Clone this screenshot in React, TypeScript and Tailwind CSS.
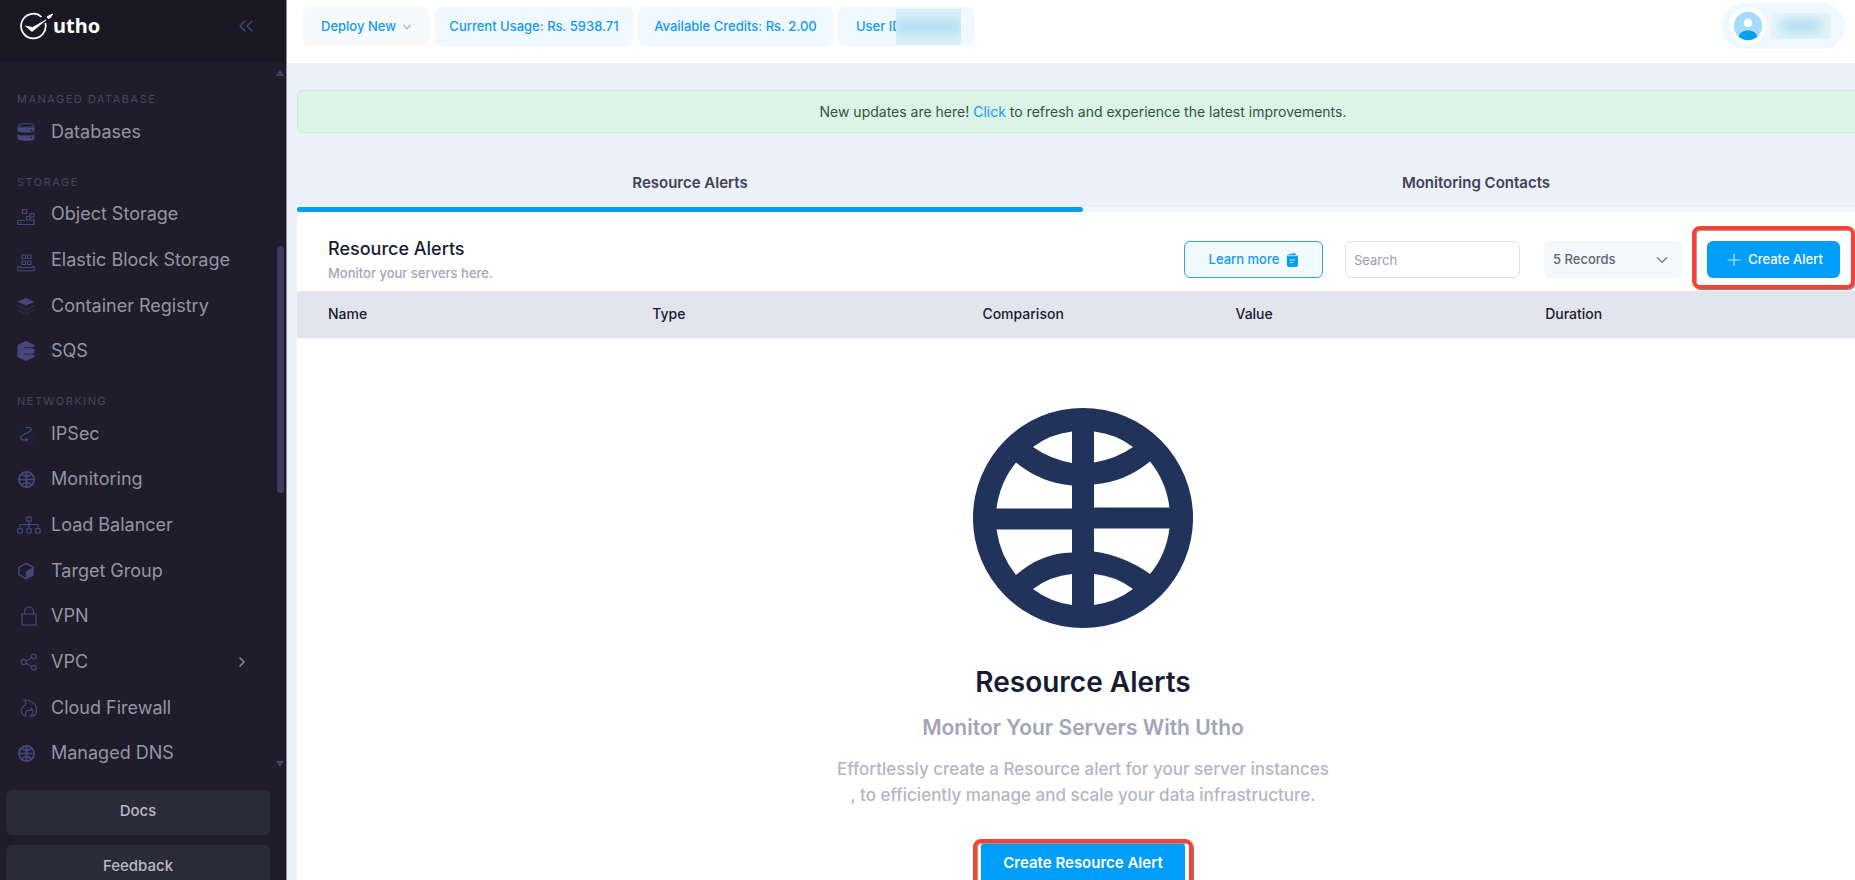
import type { ReactNode } from "react";
import { ChevronDown, ChevronRight, ChevronsLeft, Plus } from "lucide-react";

function GlobeIcon({ className }: { className: string }) {
  return (
    <svg viewBox="0 0 220 220" className={className} fill="currentColor" fillRule="evenodd" aria-hidden="true">
      <path
        d="M110 0A110 110 0 1 1 110 220A110 110 0 1 1 110 0Z
        M60 39Q77 26 99 23.5V55Q77 51 60 39Z
        M160 39Q143 26 121 23.5V54.5Q143 51 160 39Z
        M43 54.5Q68 75 99 77.5V100.5H23.5Q27 74 43 54.5Z
        M177 53.5Q152 74 121 76.5V99.5H196.500Q193 73 177 53.5Z
        M23.5 121.500H99V144.500Q68 145 43 167Q27 147 23.5 121.500Z
        M196.500 120.500H121V143.500Q152 148 177 166Q193 147 196.500 120.500Z
        M60 181Q77 168 99 166V197Q77 194 60 181Z
        M160 181Q143 168 121 166V197Q143 194 160 181Z"
      />
    </svg>
  );
}

function Icon({ className = "w-[18px] h-[18px]", box = "0 0 18 18", children }: { className?: string; box?: string; children: ReactNode }) {
  return (
    <svg viewBox={box} className={className} fill="none" stroke="currentColor" strokeWidth="1.2" aria-hidden="true">
      {children}
    </svg>
  );
}

const databaseIcon = (
  <Icon>
    <g fill="currentColor" stroke="none">
      <path d="M.5 3.500C2 5.500 16 5.500 17.500 3.500V8C16 10 2 10 .5 8Z" />
      <path d="M.5 11C2 13.200 16 13.200 17.500 11V16C16 18.500 2 18.500 .5 16Z" />
      <circle cx="14.300" cy="7.200" r=".9" fill="#1f1d2b" />
      <circle cx="14.300" cy="14.300" r=".9" fill="#1f1d2b" />
    </g>
    <ellipse cx="9" cy="2.500" rx="8" ry="1.900" strokeWidth="1" />
  </Icon>
);
const objectIcon = (
  <Icon className="mt-1.5 h-[18px] w-[18px]">
    <path d="M5.500 1.500H9.500V5.500H5.500ZM13 5.500H17V9H13ZM9.500 8.500H13V12H9.500ZM13 9V12H17V16.500H.7V12.500H8" />
    <path d="M3 14.500H4.500" />
  </Icon>
);
const blockIcon = (
  <Icon className="mt-1.5 h-[18px] w-[18px]">
    <path d="M5 1H8.500V4.500H5ZM10.500 1H14V4.500H10.500ZM5 7H8.500V10.500H5ZM10.500 7H14V10.500H10.500ZM3 12.500H.8V16.800H17.200V12.500H15M3 12.500V13.500H15V12.500" strokeWidth="1.100" />
  </Icon>
);
const layersIcon = (
  <Icon>
    <g fill="currentColor" stroke="none">
      <path d="M9 1L17.500 4.800L9 8.500L.5 4.800Z" />
      <path d="M.8 8L9 11.500L17.200 8L17.500 9.200L9 13.200L.5 9.200Z" opacity=".4" />
      <path d="M.8 12.500L9 16L17.200 12.500L17.500 13.500L9 17.500L.5 13.500Z" opacity=".4" />
    </g>
  </Icon>
);
const sqsIcon = (
  <Icon className="h-5 w-[18px]" box="0 0 18 20">
    <path fill="currentColor" stroke="none" d="M9 0L17.500 4V6L14 7L17.500 8V12L14 13L17.500 14V16L9 20L.5 16V4Z" />
    <path d="M7 6.500L17 6.800M7 13.300L17 13" stroke="#1f1d2b" strokeWidth=".7" />
  </Icon>
);
const ipsecIcon = (
  <Icon>
    <path d="M9 2.500H12.500A2 2 0 0 1 13.500 6L5.500 10.500A2 2 0 0 0 6 14.800H10" />
    <path d="M9 13.300L11 14.800L9 16.300Z" fill="currentColor" strokeWidth=".8" />
    <g stroke="#1c2450">
      <circle cx="3.500" cy="3.500" r="2.500" />
      <circle cx="14.800" cy="14" r="2.800" />
    </g>
  </Icon>
);
const balancerIcon = (
  <Icon className="h-[18px] w-6" box="0 0 24 18">
    <path d="M9.800 1.200H14.200V5.200H9.800ZM12 5.200V12M3 11.500V8.500H21V11.500" />
    <rect x=".8" y="12.500" width="4.600" height="4.600" rx="1" />
    <rect x="9.700" y="12.500" width="4.600" height="4.600" rx="1" />
    <rect x="18.600" y="12.500" width="4.600" height="4.600" rx="1" />
  </Icon>
);
const cubeIcon = (
  <Icon>
    <path d="M9 1.500L16 5.200V12.800L9 16.700L2 12.800V5.200Z" strokeWidth="1.500" />
    <path d="M16.300 5.200V13L9 17V9.300Z" fill="currentColor" stroke="none" />
  </Icon>
);
const lockIcon = (
  <Icon className="h-5 w-[18px]" box="0 0 18 20">
    <path d="M2 8H16V19H2ZM4.500 8V5.500A4.500 4.500 0 0 1 13.500 5.500V8" />
  </Icon>
);
const shareIcon = (
  <Icon>
    <circle cx="3.800" cy="9" r="2.600" />
    <circle cx="13.800" cy="3.500" r="2.400" />
    <circle cx="13.800" cy="14.700" r="2.400" />
    <path d="M6.200 8L11.600 4.800M6.200 10.200L11.600 13.500" />
  </Icon>
);
const flameIcon = (
  <Icon>
    <path d="M6 16.800H4.500C-.5 13.500 1 8.500 4.500 6.500C6.500 5 6 3 4 1C12 1 16.500 5.500 16.500 10.500C16.500 14 15 16.800 12.500 16.800H11C13.500 14.500 13.500 11.500 11.500 9.500C11.500 11.800 9.500 12.300 8.500 11C5.500 12.500 4.500 14.500 6 16.800Z" />
  </Icon>
);

type Item = { label: string; icon: ReactNode; arrow?: boolean; shift?: boolean };
const smallGlobe = <GlobeIcon className="mx-px h-[17px] w-[17px]" />;

const groups: { title: string; items: Item[] }[] = [
  { title: "MANAGED DATABASE", items: [{ label: "Databases", icon: databaseIcon }] },
  {
    title: "STORAGE",
    items: [
      { label: "Object Storage", icon: objectIcon },
      { label: "Elastic Block Storage", icon: blockIcon },
      { label: "Container Registry", icon: layersIcon },
      { label: "SQS", icon: sqsIcon },
    ],
  },
  {
    title: "NETWORKING",
    items: [
      { label: "IPSec", icon: ipsecIcon },
      { label: "Monitoring", icon: smallGlobe },
      { label: "Load Balancer", icon: balancerIcon },
      { label: "Target Group", icon: cubeIcon },
      { label: "VPN", icon: lockIcon, shift: true },
      { label: "VPC", icon: shareIcon, arrow: true, shift: true },
      { label: "Cloud Firewall", icon: flameIcon, shift: true },
      { label: "Managed DNS", icon: smallGlobe },
    ],
  },
];

function Logo() {
  return (
    <a href="#" className="flex items-center text-white">
      <svg viewBox="0 0 33 28" className="h-7 w-[33px]" fill="none" stroke="currentColor" aria-hidden="true">
        <path d="M21.500 4.800A12.300 12.300 0 1 0 25.300 11" strokeWidth="1.700" />
        <path d="M5.500 14L12 19.500L26 8L12.500 15.500Z" fill="currentColor" strokeWidth=".8" />
        <path d="M27.500 4.500L32.500 2L30.500 5.500L28 6.500Z" fill="currentColor" strokeWidth="1" />
      </svg>
      <span className="font-['Noto_Sans',sans-serif] text-xl leading-7 font-bold">utho</span>
    </a>
  );
}

function Sidebar() {
  return (
    <aside className="flex h-screen w-[287px] shrink-0 flex-col overflow-hidden border-r border-[#8d8d96] bg-[#1f1d2b]">
      <div className="flex h-[63px] shrink-0 items-start justify-between bg-[#1a1824] pt-3 pr-7 pl-5">
        <Logo />
        <button type="button" aria-label="Collapse menu" className="pt-0.5 text-[#40407a]">
          <ChevronsLeft className="h-6 w-6" strokeWidth={1.5} />
        </button>
      </div>
      <div className="flex min-h-0 flex-1">
        <nav className="flex flex-1 flex-col pt-[9px] pb-[14px] pl-[17px]">
          {groups.map((g) => (
            <div key={g.title} className="contents">
              <h2 className="flex h-[37px] shrink-0 items-end pb-0.5 text-[11px] leading-4 tracking-[1.5px] text-[#45455e]">
                {g.title}
              </h2>
              {g.items.map((it) => (
                <a key={it.label} href="#" className="flex min-h-0 flex-1 items-center pr-[26px] text-lg leading-6 text-[#9594a3]">
                  <span className={it.shift ? "flex w-[34px] pl-[3px] text-[#46467c]" : "flex w-[34px] text-[#46467c]"}>{it.icon}</span>
                  <span className="flex-1 whitespace-nowrap">{it.label}</span>
                  {it.arrow && <ChevronRight className="h-4 w-4" />}
                </a>
              ))}
            </div>
          ))}
        </nav>
        <div className="flex w-[10px] flex-col items-center pt-[7px] pr-0.5 pb-[23px] text-[#46436e]" aria-hidden="true">
          <svg viewBox="0 0 8 6" className="h-1.5 w-2" fill="currentColor"><path d="M4 0L8 6H0Z" /></svg>
          <div className="flex-[170]" />
          <div className="w-[7px] flex-[247] rounded-full bg-[#3f3b63]" />
          <div className="flex-[268]" />
          <svg viewBox="0 0 8 6" className="h-1.5 w-2" fill="currentColor"><path d="M4 6L8 0H0Z" /></svg>
        </div>
      </div>
      <div className="flex h-[90px] shrink-0 flex-col gap-[10px] pr-4 pl-1.5">
        {["Docs", "Feedback"].map((t) => (
          <button key={t} type="button" className="h-[45px] shrink-0 rounded-md bg-[#2a2a39] pb-0.5 text-[15px] font-medium text-[#b9b9c6]">
            {t}
          </button>
        ))}
      </div>
    </aside>
  );
}

function TopBar() {
  return (
    <header className="flex h-[63px] items-start justify-between bg-white pt-[3px] pr-[10px] pl-4">
      <div className="flex gap-[5px] pt-1 text-[13px] font-medium whitespace-nowrap text-[#1499ee]">
        <button type="button" className="flex h-[39px] w-[127px] items-center justify-between rounded-md bg-[#f7f9fb] pr-4 pl-[18px]">
          Deploy New
          <ChevronDown className="h-3.5 w-3.5 text-[#a5b0c0]" />
        </button>
        <div className="flex h-[39px] w-[198px] items-center justify-center rounded-md bg-[#f0f9ff]">Current Usage: Rs. 5938.71</div>
        <div className="flex h-[39px] w-[195px] items-center justify-center rounded-md bg-[#f0f9ff]">Available Credits: Rs. 2.00</div>
        <div className="flex h-[39px] w-[136px] items-center rounded-md bg-[#f0f9ff] pr-[13px] pl-[18px]">
          <span>User ID</span>
          <span className="relative -ml-1.5 flex h-9 flex-1 items-center overflow-hidden bg-[#d9f0f8]">
            <span className="h-4 w-full bg-[#b5e0f1] blur-[5px]" />
          </span>
        </div>
      </div>
      <button type="button" aria-label="Account" className="flex h-[46px] w-[123px] items-center gap-1 rounded-full bg-[#eff8fe] pl-[7px]">
        <svg viewBox="0 0 38 38" className="h-[38px] w-[38px]" aria-hidden="true">
          <circle cx="19" cy="19" r="18.500" fill="#fff" />
          <circle cx="19" cy="19" r="14.200" fill="#a5dcfb" />
          <circle cx="19" cy="16" r="4.300" fill="#fff" />
          <path d="M9.500 29.500C12 21.500 26 21.500 28.500 29.500A14.200 14.200 0 0 1 9.500 29.500Z" fill="#009ef7" />
        </svg>
        <span className="flex h-[26px] w-[60px] items-center justify-center overflow-hidden bg-[#e6f4fb]">
          <span className="h-3 w-10 bg-[#a9d9ee] blur-[6px]" />
        </span>
      </button>
    </header>
  );
}

const columns = [
  { label: "Name", width: "w-[22.6%] pl-[31px]" },
  { label: "Type", width: "w-[21%]" },
  { label: "Comparison", width: "w-[16.1%]" },
  { label: "Value", width: "w-[19.7%]" },
  { label: "Duration", width: "" },
];

const highlight = "pointer-events-none absolute rounded-lg border-4 border-[#f44336] shadow-[1px_1px_1px_#777,inset_1px_1px_1px_#999]";

function Toolbar() {
  return (
    <div className="flex h-[79px] items-start justify-between pr-[29px] pl-[31px]">
      <div className="pt-[23px]">
        <h1 className="text-lg leading-7 font-medium text-[#181c32]">Resource Alerts</h1>
        <p className="text-[13px] leading-5 font-medium text-[#a1a5b7]">Monitor your servers here.</p>
      </div>
      <div className="flex pt-[29px]">
        <button type="button" className="mr-[22px] flex h-[37px] w-[139px] items-center justify-center gap-2 rounded-md border border-[#3a9fd8] bg-[#f1faff] text-[13px] font-medium text-[#1499ee]">
          Learn more
          <svg viewBox="0 0 11 14" className="h-[14px] w-[11px]" aria-hidden="true">
            <path d="M1 1.500L8.500 0V2H9.500Q11 2 11 3.500V12Q11 14 9 14H2Q0 14 0 12V3.500Q0 2 1 2Z" fill="#009ef7" />
            <path d="M1 2.700H10M2.800 7H8M2.800 9.500H6.500" stroke="#d9f1ff" strokeWidth=".9" />
          </svg>
        </button>
        <input type="text" aria-label="Search" placeholder="Search" className="mr-6 h-[37px] w-[175px] rounded-md border border-[#e1e3ea] bg-white px-2 text-[13px] placeholder:text-[#9a9cae]" />
        <div className="relative mr-6">
          <select aria-label="Records" className="h-[37px] w-[139px] appearance-none rounded-md bg-[#f5f8fa] pl-[9px] text-[13px] font-medium text-[#5e6278]">
            <option>5 Records</option>
          </select>
          <ChevronDown className="pointer-events-none absolute top-2.5 right-3 h-[18px] w-[18px] text-[#7e8299]" />
        </div>
        <div className="relative">
          <button type="button" className="flex h-[37px] w-[133px] items-center justify-center gap-1 rounded-md bg-[#009ef7] text-[13px] font-medium text-white">
            <Plus className="h-5 w-5 opacity-80" strokeWidth={1.25} />
            Create Alert
          </button>
          <div className={`${highlight} -top-[15px] -right-[15px] -bottom-[11px] -left-[15px]`} />
        </div>
      </div>
    </div>
  );
}

function EmptyState() {
  return (
    <div className="flex flex-col items-center pt-[70px] text-center">
      <GlobeIcon className="h-[220px] w-[220px] text-[#21325b]" />
      <h2 className="pt-9 text-[28px] leading-9 font-semibold text-[#181c32]">Resource Alerts</h2>
      <h3 className="pt-3 text-[21px] leading-8 font-semibold text-[#a1a5b7]">Monitor Your Servers With Utho</h3>
      <p className="pt-3 text-[17px] leading-[26px] font-medium text-[#b5b5c3]">
        Effortlessly create a Resource alert for your server instances
        <br />, to efficiently manage and scale your data infrastructure.
      </p>
      <div className="relative mt-[35px]">
        <button type="button" className="h-10 w-[204px] rounded bg-[#009ef7] text-[15px] font-semibold text-white">
          Create Resource Alert
        </button>
        <div className={`${highlight} -inset-x-2 -top-1 -bottom-2`} />
      </div>
    </div>
  );
}

export default function App() {
  return (
    <div className="flex h-screen overflow-hidden font-['Inter',sans-serif]">
      <Sidebar />
      <div className="min-w-0 flex-1 overflow-hidden bg-[#ebf0f9]">
        <TopBar />
        <main className="-mr-[14px] pt-[27px] pl-[10px]">
          <p className="flex h-[43px] items-center justify-center rounded-md border border-[#c9edd5] bg-[#dcf4e6] text-sm text-[#33533f]">
            <span>
              New updates are here! <a href="#" className="text-[#1499ee]">Click</a> to refresh and experience the latest improvements.
            </span>
          </p>
          <div role="tablist" className="mt-[26px] grid grid-cols-2 text-[15px] font-semibold text-[#3f4254]">
            <button type="button" role="tab" aria-selected="true">
              <span className="flex h-12 items-center justify-center">Resource Alerts</span>
              <span className="block h-[5px] rounded-full bg-[#009ef7]" />
            </button>
            <button type="button" role="tab" aria-selected="false">
              <span className="flex h-12 items-center justify-center">Monitoring Contacts</span>
              <span className="block h-[5px] bg-[#f5f8fc]" />
            </button>
          </div>
          <section className="min-h-screen rounded-t-lg bg-white">
            <Toolbar />
            <table className="w-full table-fixed bg-[#e3e4ee] text-left text-sm text-[#181c32]">
              <thead>
                <tr className="h-[47px]">
                  {columns.map((c) => (
                    <th key={c.label} scope="col" className={`pb-0.5 font-medium ${c.width}`}>{c.label}</th>
                  ))}
                </tr>
              </thead>
            </table>
            <EmptyState />
          </section>
        </main>
      </div>
    </div>
  );
}
